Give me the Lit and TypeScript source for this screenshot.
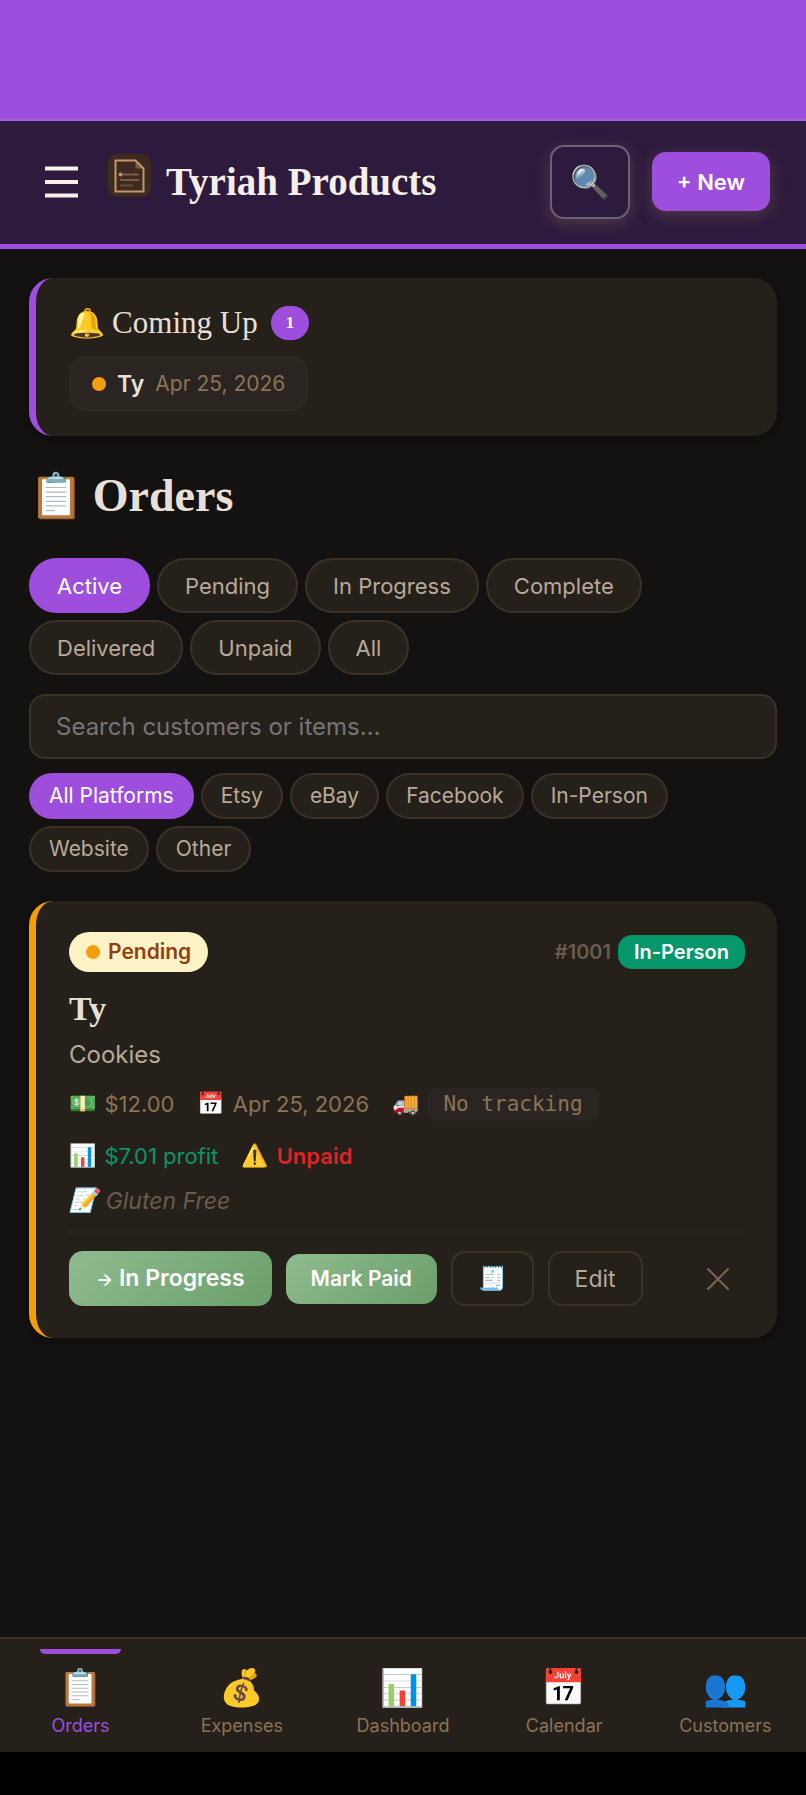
import { LitElement, html, css } from "lit";
import { customElement, state } from "lit/decorators.js";

const FILTERS = ["Active", "Pending", "In Progress", "Complete", "Delivered", "Unpaid", "All"];
const PLATFORMS = ["All Platforms", "Etsy", "eBay", "Facebook", "In-Person", "Website", "Other"];
const TABS = [
  { icon: "📋", label: "Orders" },
  { icon: "💰", label: "Expenses" },
  { icon: "📊", label: "Dashboard" },
  { icon: "📅", label: "Calendar" },
  { icon: "👥", label: "Customers" },
];

@customElement("app-root")
export class AppRoot extends LitElement {
  @state() private filter = "Active";
  @state() private platform = "All Platforms";
  @state() private tab = "Orders";

  static styles = css`
    :host {
      --accent: #9d4edd;
      --surface: #25201a;
      --raised: #2a2521;
      --line: #3a3228;
      --text: #e8e0d8;
      --soft: #b8a99a;
      --muted: #8b7355;
      --faint: #6b5b4d;
      --sans: "Inter", "Noto Color Emoji", sans-serif;
      --serif: "Liberation Serif", "Noto Color Emoji", serif;
      display: flex;
      flex-direction: column;
      min-height: 100vh;
      background: #131210;
      color: var(--text);
      font-family: var(--sans);
      font-size: 22px;
      line-height: 32px;
    }
    * { box-sizing: border-box; }
    h1, h2, h3, p { margin: 0; }
    button, input { font: inherit; color: inherit; margin: 0; }
    button { cursor: pointer; white-space: nowrap; }
    a { color: inherit; text-decoration: none; }
    svg { display: block; }

    .status { height: 119px; background: var(--accent); }
    .header {
      display: flex;
      align-items: center;
      height: 130px;
      padding: 0 36px 2px;
      background: #2d1b3d;
      border-top: 2px solid #a45fdc;
      border-bottom: 5px solid var(--accent);
    }
    .menu { padding: 8px; border: 0; background: none; color: #f8f0ea; }
    .logo { margin: 0 15px 12px 21px; }
    .brand {
      flex: 1;
      color: #f5efe9;
      font: 700 39px/48px var(--serif);
    }
    .find {
      width: 80px;
      height: 74px;
      margin-right: 22px;
      padding: 0;
      border: 2px solid #6c5f78;
      border-radius: 14px;
      background: #2d1b3d;
      font-size: 32px;
      box-shadow: 0 4px 16px rgba(196, 149, 106, 0.25);
    }
    .new {
      height: 59px;
      padding: 0 25px;
      border: 0;
      border-radius: 14px;
      background: var(--accent);
      color: #fff;
      font-weight: 600;
      box-shadow: 0 4px 16px rgba(196, 149, 106, 0.25);
    }

    .main { flex: 1; padding: 29px; }
    .card {
      padding: 24px 33px;
      border-left: 7px solid var(--accent);
      border-radius: 24px;
      background: var(--surface);
      box-shadow: 0 4px 12px rgba(0, 0, 0, 0.3);
    }
    .coming { display: flex; align-items: center; gap: 7px; font: 400 31px/42px var(--serif); }
    .emoji { font-family: "Noto Color Emoji"; font-weight: 400; }
    .coming .emoji { font-size: 29px; }
    .count {
      margin-left: 6px;
      padding: 0 15px;
      border-radius: 17px;
      background: var(--accent);
      color: #fff;
      font: 700 17px/34px var(--serif);
    }
    .event {
      display: inline-flex;
      align-items: center;
      gap: 11px;
      height: 55px;
      margin-top: 12px;
      margin-bottom: 1px;
      padding: 0 21px;
      border: 2px solid #302a24;
      border-radius: 18px;
      background: var(--raised);
      vertical-align: top;
    }
    .event strong { font-weight: 600; font-size: 23px; }
    .event time { color: var(--muted); font-size: 21px; }
    .dot { width: 14px; height: 14px; border-radius: 50%; background: #f59e0b; }

    .title {
      display: flex;
      align-items: center;
      gap: 9px;
      margin: 28px 0 30px;
      font: 700 46px/64px var(--serif);
    }
    .title .emoji { font-size: 44px; }
    .pills { display: flex; flex-wrap: wrap; gap: 7px; }
    .pill {
      height: 55px;
      padding: 0 26px;
      border: 2px solid var(--line);
      border-radius: 28px;
      background: var(--surface);
      color: var(--soft);
    }
    .small .pill { height: 46px; padding: 0 18px; border-radius: 23px; font-size: 21px; }
    .pills .on { border-color: var(--accent); background: var(--accent); color: #fff; }
    .search {
      display: block;
      width: 100%;
      height: 65px;
      margin: 19px 0 14px;
      padding: 0 25px;
      border: 2px solid var(--line);
      border-radius: 16px;
      background: var(--surface);
      color: var(--text);
      font-size: 24px;
      outline: none;
    }
    .search::placeholder { color: #757575; opacity: 1; }

    .order { margin-top: 29px; padding: 31px 32px 32px 33px; border-left-color: #f59e0b; }
    .top { display: flex; align-items: center; justify-content: space-between; }
    .state {
      display: flex;
      align-items: center;
      gap: 8px;
      height: 40px;
      padding: 0 17px;
      border-radius: 20px;
      background: #fef3c7;
      color: #92400e;
      font-size: 21px;
      font-weight: 600;
    }
    .ids { display: flex; align-items: center; gap: 7px; font-size: 20px; font-weight: 600; color: var(--faint); }
    .tag {
      padding: 0 16px;
      border-radius: 14px;
      background: #059669;
      color: #fff;
      line-height: 34px;
    }
    .name { margin-top: 15px; font: 700 34px/44px var(--serif); }
    .item { margin-top: 7px; color: var(--soft); font-size: 24px; line-height: 34px; }
    .meta {
      display: flex;
      flex-wrap: wrap;
      gap: 16px 23px;
      margin-top: 14px;
      color: var(--muted);
      line-height: 36px;
    }
    .meta .fact, .note { display: flex; align-items: center; gap: 8px; }
    .meta .profit { color: #059669; }
    .meta .unpaid { color: #dc2626; font-weight: 600; }
    .track {
      padding: 0 16px;
      border-radius: 8px;
      background: var(--raised);
      font: 21px/33px "DejaVu Sans Mono", monospace;
    }
    .note { margin-top: 11px; color: var(--faint); font-size: 23px; font-style: italic; }
    .actions {
      display: flex;
      align-items: center;
      gap: 14px;
      margin-top: 14px;
      padding-top: 18px;
      border-top: 2px solid #2a2622;
    }
    .btn {
      height: 55px;
      padding: 0 25px;
      border: 2px solid var(--line);
      border-radius: 14px;
      background: none;
      color: var(--soft);
      font-size: 23px;
    }
    .go {
      padding: 0 27px;
      border: 0;
      background: linear-gradient(135deg, #8fbc8f, #6b9e6b);
      color: #fff;
      font-weight: 600;
    }
    .arrow { font-size: 18px; }
    .paid { height: 50px; padding: 0 25px; font-size: 21px; }
    .close { margin-left: auto; padding: 16px; border: 0; background: none; color: #7a6654; }

    .tabs {
      display: grid;
      grid-template-columns: repeat(5, 1fr);
      height: 115px;
      border-top: 2px solid var(--line);
      background: var(--surface);
      color: var(--muted);
    }
    .tab {
      position: relative;
      display: flex;
      flex-direction: column;
      align-items: center;
      gap: 4px;
      padding-top: 27px;
      font-size: 18px;
      line-height: 24px;
    }
    .tab .emoji { font-size: 36px; line-height: 44px; }
    .current { color: var(--accent); }
    .current::before {
      content: "";
      position: absolute;
      top: 10px;
      width: 50%;
      height: 5px;
      border-radius: 0 0 5px 5px;
      background: var(--accent);
    }
    .inset { height: 43px; background: #000; }
  `;

  private pills(items: string[], current: string, pick: (v: string) => void) {
    return items.map(
      (v) => html`<button class="pill ${v === current ? "on" : ""}" aria-pressed=${v === current}
        @click=${() => pick(v)}>${v}</button>`
    );
  }

  render() {
    return html`
      <div class="status"></div>
      <header class="header">
        <button class="menu" aria-label="Menu">
          <svg width="35" height="34" viewBox="0 0 35 34" stroke="currentColor" stroke-width="4">
            <path d="M1 3.5h33M1 17h33M1 30.5h33" />
          </svg>
        </button>
        <svg class="logo" width="43" height="43" viewBox="0 0 43 43" fill="none">
          <rect width="43" height="43" rx="9" fill="#3d2b1f" />
          <path d="M27.500 6.500v8h8z" fill="#7d5b40" />
          <path d="M7.500 6.500h20l8 8v23h-28z" stroke="#c4956a" stroke-width="2" />
          <path d="M12 20.500h19M12 26h19" stroke="#7d5b40" stroke-width="2" />
          <path d="M12 31.500h13" stroke="#6b4d36" stroke-width="2" />
          <circle cx="12.500" cy="20.500" r="2" fill="#c4956a" />
        </svg>
        <h1 class="brand">Tyriah Products</h1>
        <button class="find" aria-label="Search"><span class="emoji">🔍</span></button>
        <button class="new">+ New</button>
      </header>

      <main class="main">
        <section class="card">
          <h2 class="coming"><span class="emoji">🔔</span>Coming Up<span class="count">1</span></h2>
          <div class="event"><span class="dot"></span><strong>Ty</strong><time>Apr 25, 2026</time></div>
        </section>

        <h2 class="title"><span class="emoji">📋</span>Orders</h2>
        <div class="pills">${this.pills(FILTERS, this.filter, (v) => (this.filter = v))}</div>
        <input class="search" type="search" aria-label="Search orders" placeholder="Search customers or items…" />
        <div class="pills small">${this.pills(PLATFORMS, this.platform, (v) => (this.platform = v))}</div>

        <article class="card order">
          <div class="top">
            <span class="state"><span class="dot"></span>Pending</span>
            <span class="ids">#1001<span class="tag">In-Person</span></span>
          </div>
          <h3 class="name">Ty</h3>
          <p class="item">Cookies</p>
          <div class="meta">
            <span class="fact"><span class="emoji">💵</span>$12.00</span>
            <span class="fact"><span class="emoji">📅</span>Apr 25, 2026</span>
            <span class="fact"><span class="emoji">🚚</span><code class="track">No tracking</code></span>
            <span class="fact profit"><span class="emoji">📊</span>$7.01 profit</span>
            <span class="fact unpaid"><span class="emoji">⚠️</span>Unpaid</span>
          </div>
          <p class="note"><span class="emoji">📝</span>Gluten Free</p>
          <div class="actions">
            <button class="btn go"><span class="arrow">→</span> In Progress</button>
            <button class="btn go paid">Mark Paid</button>
            <button class="btn" aria-label="Receipt"><span class="emoji">🧾</span></button>
            <button class="btn">Edit</button>
            <button class="close" aria-label="Delete order">
              <svg width="22" height="22" viewBox="0 0 22 22" stroke="currentColor" stroke-width="2" stroke-linecap="round">
                <path d="M1 1l20 20M21 1L1 21" />
              </svg>
            </button>
          </div>
        </article>
      </main>

      <nav class="tabs">
        ${TABS.map(
          (t) => html`<a class="tab ${t.label === this.tab ? "current" : ""}" href="#${t.label}"
            @click=${() => (this.tab = t.label)}><span class="emoji">${t.icon}</span>${t.label}</a>`
        )}
      </nav>
      <div class="inset"></div>
    `;
  }
}
